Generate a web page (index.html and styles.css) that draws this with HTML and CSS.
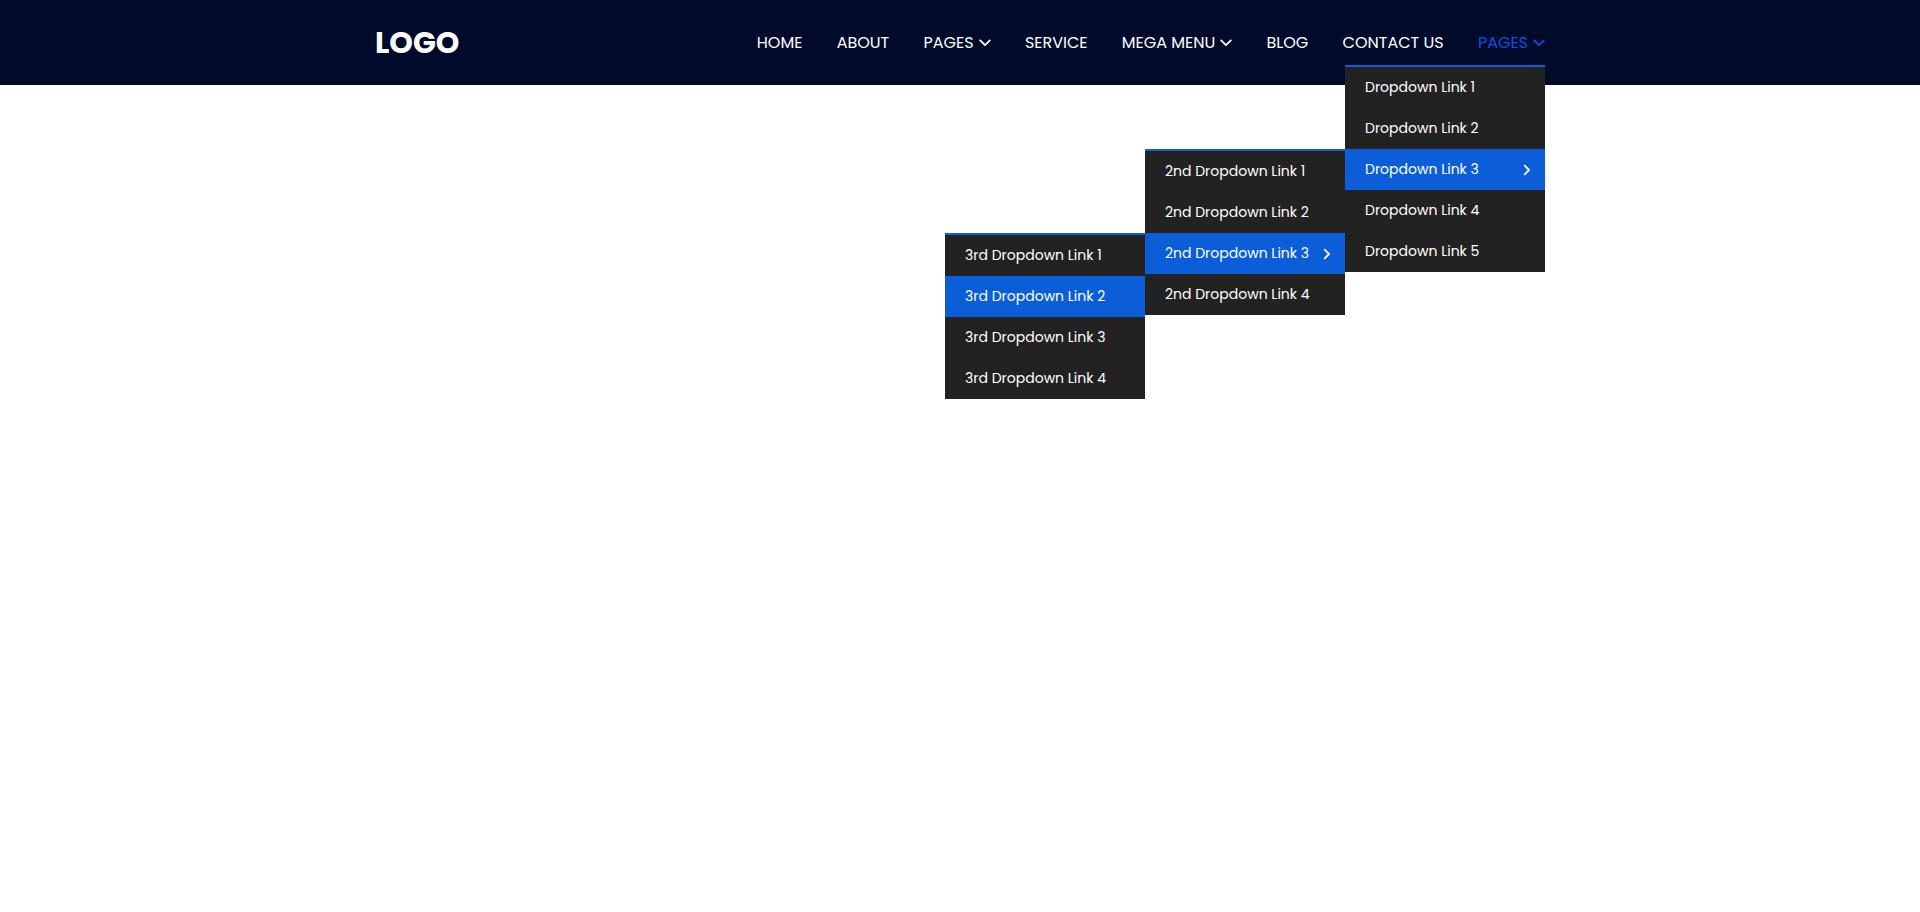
FILE: index.html
```html
<!DOCTYPE html>
<html lang="en">
<head>
<meta charset="utf-8">
<title>Navigation</title>
<link rel="stylesheet" href="styles.css">
</head>
<body>
<header class="header">
  <div class="container">
    <a class="logo">LOGO</a>
    <ul class="nav">
      <li class="item"><span>HOME</span></li>
      <li class="item"><span>ABOUT</span></li>
      <li class="item"><span>PAGES</span><svg class="down" viewBox="0 0 12 8"><path d="M1.2 1.4 6 6.2l4.800-4.800"/></svg></li>
      <li class="item"><span>SERVICE</span></li>
      <li class="item"><span>MEGA MENU</span><svg class="down" viewBox="0 0 12 8"><path d="M1.2 1.4 6 6.2l4.800-4.800"/></svg></li>
      <li class="item"><span>BLOG</span></li>
      <li class="item"><span>CONTACT US</span></li>
      <li class="item active"><span>PAGES</span><svg class="down" viewBox="0 0 12 8"><path d="M1.2 1.4 6 6.2l4.800-4.800"/></svg>
        <ul class="menu first">
          <li>Dropdown Link 1</li>
          <li>Dropdown Link 2</li>
          <li class="on">Dropdown Link 3<svg class="right" viewBox="0 0 8 12"><path d="M1.700 1.700 6 6l-4.300 4.300"/></svg>
            <ul class="menu sub">
              <li>2nd Dropdown Link 1</li>
              <li>2nd Dropdown Link 2</li>
              <li class="on">2nd Dropdown Link 3<svg class="right" viewBox="0 0 8 12"><path d="M1.700 1.700 6 6l-4.300 4.300"/></svg>
                <ul class="menu sub">
                  <li>3rd Dropdown Link 1</li>
                  <li class="on">3rd Dropdown Link 2</li>
                  <li>3rd Dropdown Link 3</li>
                  <li>3rd Dropdown Link 4</li>
                </ul>
              </li>
              <li>2nd Dropdown Link 4</li>
            </ul>
          </li>
          <li>Dropdown Link 4</li>
          <li>Dropdown Link 5</li>
        </ul>
      </li>
    </ul>
  </div>
</header>
</body>
</html>
```
FILE: styles.css
```css
* { box-sizing: border-box; }
body { margin: 0; min-height: 100vh; background: #fff; font-family: Poppins, Inter, sans-serif; }
ul { list-style: none; margin: 0; padding: 0; }
.header { height: 85px; background: #000a2b; }
.container { width: 1170px; height: 100%; margin: 0 auto; display: flex; align-items: center; justify-content: space-between; }
.logo { color: #fff; font-size: 30px; font-weight: 700; line-height: 45px; }
.nav { display: flex; gap: 34.25px; }
.item { position: relative; display: flex; align-items: center; gap: 5px; height: 45px; color: #fff; font-size: 16px; line-height: 24px; white-space: nowrap; }
.active { color: #0a53e4; }
.down { width: 12px; height: 8px; }
.right { width: 8px; height: 12px; }
svg { fill: none; stroke: currentColor; stroke-width: 1.8; stroke-linecap: round; stroke-linejoin: round; }
.menu { position: absolute; width: 200px; border-top: 2px solid #0b5ed7; background: #222; color: #fff; font-size: 14px; line-height: 21px; }
.first { top: 45px; right: 0; }
.sub { top: 0; right: 100%; }
.menu li { position: relative; display: flex; align-items: center; justify-content: space-between; height: 41px; padding: 0 14px 0 20px; }
.menu .on { background: #0b5ed7; }
```
